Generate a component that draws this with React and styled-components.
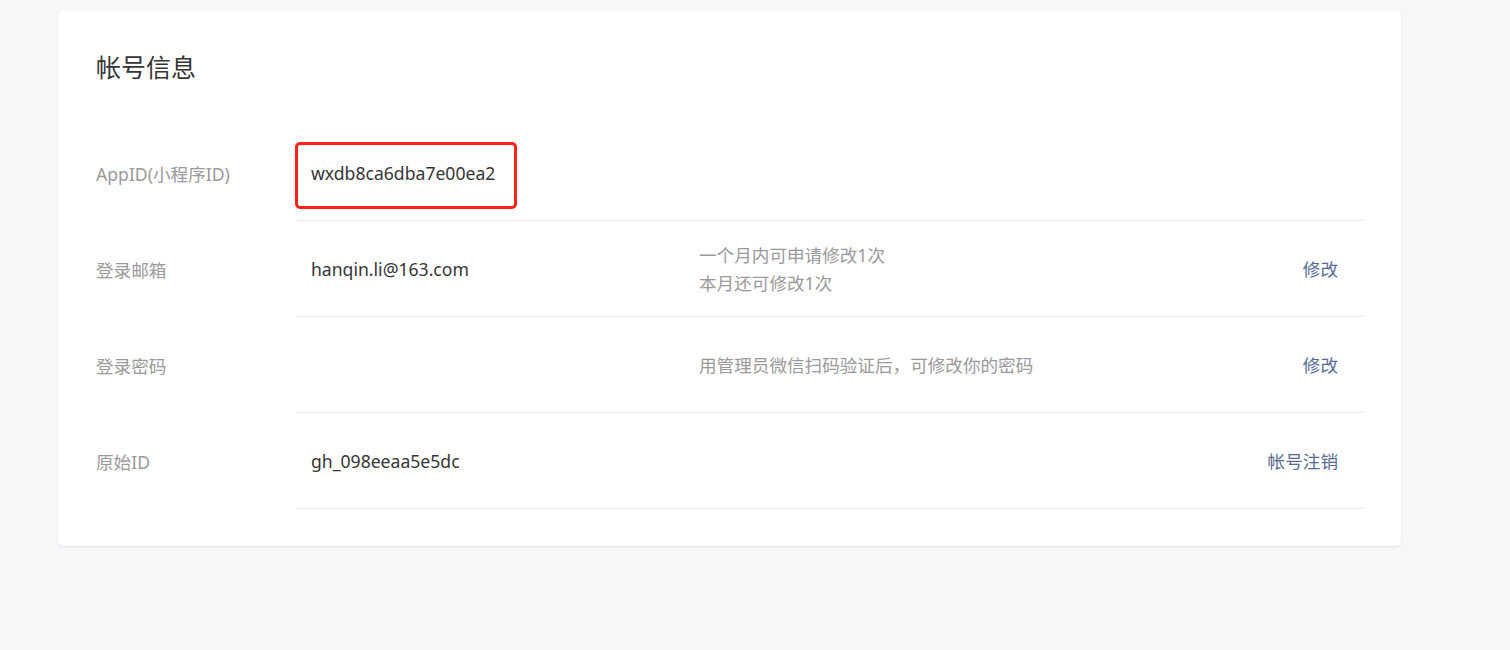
import React from "react";
import styled, { createGlobalStyle } from "styled-components";

const GlobalStyle = createGlobalStyle`
  html, body { margin: 0; padding: 0; background: #f6f7f9; }
  body { font-family: "Noto Sans", "Noto Sans CJK SC", sans-serif; }
`;

const Page = styled.div`
  padding: 10px 0 0 58px;
  min-height: 640px;
`;

const Card = styled.section`
  width: 1343px;
  box-sizing: border-box;
  background: #fff;
  border-radius: 5px;
  box-shadow: 0 1px 2px rgba(160, 165, 175, 0.28);
  padding: 40px 38px 37px 38px;
`;

const Title = styled.h2`
  margin: 0 0 42px 0;
  font-size: 25px;
  line-height: 33px;
  font-weight: 400;
  color: #353535;
  font-family: "Noto Sans CJK SC", sans-serif;
`;

const Row = styled.div`
  display: grid;
  grid-template-columns: 201px 1fr;
  height: 96px;
  font-size: 17.6px;
`;

const Label = styled.div`
  display: flex;
  align-items: center;
  color: #9a9a9a;
  font-family: "Noto Sans", "Noto Sans CJK SC", sans-serif;
`;

const Content = styled.div`
  display: grid;
  grid-template-columns: 402px 1fr auto;
  align-items: center;
  border-bottom: 1px solid #e7e7eb;
  padding-right: 25px;
`;

const Value = styled.div`
  position: relative;
  padding-left: 14px;
  color: #353535;
  display: flex;
  align-items: center;
  height: 100%;
`;

const Highlight = styled.span`
  position: absolute;
  left: -2px;
  top: 17px;
  width: 222px;
  height: 67px;
  box-sizing: border-box;
  border: 3px solid #ff2417;
  border-radius: 5px;
  pointer-events: none;
`;

const Desc = styled.div`
  color: #9a9a9a;
  line-height: 28px;
  font-family: "Noto Sans", "Noto Sans CJK SC", sans-serif;
`;

const Action = styled.a`
  color: #576b95;
  text-decoration: none;
  cursor: pointer;
  font-family: "Noto Sans CJK SC", sans-serif;
`;

const rows = [
  { label: "AppID(小程序ID)", value: "wxdb8ca6dba7e00ea2", highlight: true },
  {
    label: "登录邮箱",
    value: "hanqin.li@163.com",
    desc: ["一个月内可申请修改1次", "本月还可修改1次"],
    action: "修改",
  },
  {
    label: "登录密码",
    value: "",
    desc: ["用管理员微信扫码验证后，可修改你的密码"],
    action: "修改",
  },
  { label: "原始ID", value: "gh_098eeaa5e5dc", action: "帐号注销" },
];

export default function App() {
  return (
    <>
      <GlobalStyle />
      <Page>
        <Card>
          <Title>帐号信息</Title>
          {rows.map((r) => (
            <Row key={r.label}>
              <Label>{r.label}</Label>
              <Content>
                <Value>
                  {r.value}
                  {r.highlight && <Highlight />}
                </Value>
                <Desc>
                  {(r.desc || []).map((d) => (
                    <div key={d}>{d}</div>
                  ))}
                </Desc>
                <Action>{r.action}</Action>
              </Content>
            </Row>
          ))}
        </Card>
      </Page>
    </>
  );
}
